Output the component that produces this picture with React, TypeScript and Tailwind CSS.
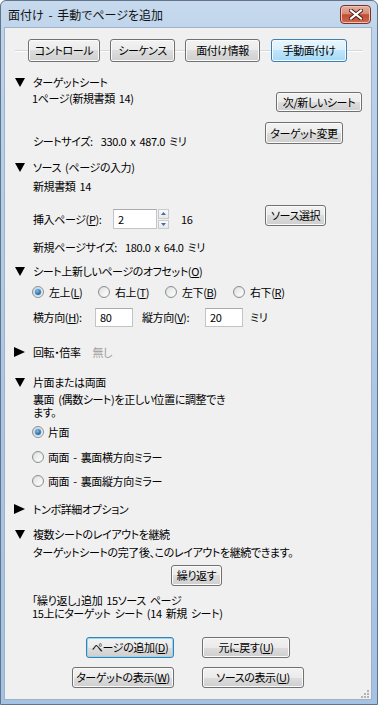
import React from "react";

const btnGray =
  "border-[#707070] bg-[linear-gradient(#f2f2f2,#ebebeb_50%,#dddddd_50%,#cfcfcf)] shadow-[inset_0_0_0_1px_#fbfbfb]";
const btnBlue =
  "border-[#3c7fb1] bg-[linear-gradient(#eaf6fd,#d9f0fc_50%,#bee6fd_50%,#a7d9f5)] shadow-[inset_0_0_0_1px_#f4fbff]";
const btnFocus =
  "border-[#3c7fb1] bg-[linear-gradient(#f2f2f2,#ebebeb_50%,#dddddd_50%,#cfcfcf)] shadow-[inset_0_0_0_1px_#8fd9f6]";

function Btn({
  children,
  className = "",
  kind = "gray",
}: {
  children: React.ReactNode;
  className?: string;
  kind?: "gray" | "blue" | "focus";
}) {
  const look = kind === "blue" ? btnBlue : kind === "focus" ? btnFocus : btnGray;
  return (
    <div
      className={`shrink-0 flex items-center justify-center rounded-[3px] border whitespace-nowrap leading-none ${look} ${className}`}
    >
      {children}
    </div>
  );
}

function Tri({ open }: { open: boolean }) {
  return open ? (
    <svg width="10" height="9" viewBox="0 0 10 9" className="shrink-0">
      <path d="M0 0H10L5 9Z" fill="#000" />
    </svg>
  ) : (
    <svg width="11" height="10" viewBox="0 0 11 10" className="shrink-0 -ml-[1px]">
      <path d="M0 0L11 5L0 10Z" fill="#000" />
    </svg>
  );
}

function Header({ open, children }: { open: boolean; children: React.ReactNode }) {
  return (
    <div className="h-[14px] flex items-center pl-[10px] whitespace-nowrap leading-none">
      <Tri open={open} />
      <span className="ml-[8px]">{children}</span>
    </div>
  );
}

function Radio({ checked = false }: { checked?: boolean }) {
  return (
    <span className="w-[12px] h-[12px] rounded-full border border-[#8c8f92] bg-[linear-gradient(135deg,#d6d8da,#f8f8f8)] flex items-center justify-center shrink-0">
      {checked ? (
        <span className="w-[8px] h-[8px] rounded-full border border-[#b8d8ef] bg-[radial-gradient(circle_at_40%_35%,#7fc0ee,#1d5f99_70%)]" />
      ) : (
        <span className="w-[8px] h-[8px] rounded-full bg-[linear-gradient(135deg,#e2e3e4,#fdfdfd)]" />
      )}
    </span>
  );
}

function Box({ value, className = "" }: { value: string; className?: string }) {
  return (
    <div
      className={`shrink-0 bg-white border border-[#c2c4c8] border-t-[#a9abb0] flex items-center pl-[4px] leading-none ${className}`}
    >
      {value}
    </div>
  );
}

function Spin() {
  return (
    <div className="w-[11px] h-[20px] flex flex-col gap-[1px] shrink-0">
      <div className="flex-1 border border-[#c8cacd] bg-[linear-gradient(#fafafa,#e6e8ea)] flex items-center justify-center">
        <svg width="5" height="3" viewBox="0 0 5 3">
          <path d="M0 3L2.5 0L5 3Z" fill="#4a6a9a" />
        </svg>
      </div>
      <div className="flex-1 border border-[#c8cacd] bg-[linear-gradient(#fafafa,#e6e8ea)] flex items-center justify-center">
        <svg width="5" height="3" viewBox="0 0 5 3">
          <path d="M0 0L2.5 3L5 0Z" fill="#4a6a9a" />
        </svg>
      </div>
    </div>
  );
}

function Seg({ w }: { w: string }) {
  return <div className={`h-[2px] border-t border-[#d3d9df] border-b-white border-b ${w}`} />;
}

export default function App() {
  return (
    <div className="w-[378px] h-[705px] flex flex-col relative overflow-hidden rounded-t-[6px] border border-[#61748a] bg-[linear-gradient(#c7daee,#bcd2ea_6%,#aac6e5_60%,#a3c2e4)] pl-[3px] pr-[5px] pb-[4px] text-[11px] tracking-[-0.4px] [word-spacing:2px] text-black font-['Noto_Sans_CJK_JP',sans-serif] [font-feature-settings:'palt']">
      {/* title bar */}
      <div className="h-[26px] flex items-start shrink-0">
        <div className="pl-[4px] pt-[8px] leading-none whitespace-nowrap text-[12px] tracking-normal text-[#111]">
          面付け - 手動でページを追加
        </div>
        <div className="ml-auto mt-[4px] mr-[1px] w-[31px] h-[19px] rounded-[4px] border border-[#7a3226] bg-[linear-gradient(#e6b0a1,#d68a77_45%,#c14c33_52%,#cc6a52)] shadow-[inset_0_0_0_1px_#efc3b5] flex items-center justify-center">
          <svg width="14" height="11" viewBox="0 0 14 11">
            <path d="M2 1.5L12 9.5M12 1.5L2 9.5" stroke="#4a1a12" strokeWidth="4" strokeLinecap="square" />
            <path d="M2 1.5L12 9.5M12 1.5L2 9.5" stroke="#ffffff" strokeWidth="2.2" strokeLinecap="square" />
          </svg>
        </div>
      </div>

      {/* client */}
      <div className="flex-1 bg-[#f0f0f0] border border-[#9fb2c8] flex flex-col">
        {/* tabs */}
        <div className="mt-[11px] h-[23px] flex items-center">
          <div className="w-[10px]" />
          <Seg w="w-[13px]" />
          <Btn className="w-[72px] h-[23px]">コントロール</Btn>
          <Seg w="w-[10px]" />
          <Btn className="w-[65px] h-[23px]">シーケンス</Btn>
          <Seg w="w-[10px]" />
          <Btn className="w-[75px] h-[23px]">面付け情報</Btn>
          <Seg w="w-[11px]" />
          <Btn kind="blue" className="w-[76px] h-[23px]">手動面付け</Btn>
          <Seg w="w-[16px]" />
        </div>

        {/* target sheet */}
        <div className="mt-[13px]">
          <Header open>ターゲットシート</Header>
        </div>
        <div className="mt-[2px] h-[57px] flex">
          <div className="flex-1 pl-[27px] flex flex-col">
            <div className="h-[14px] flex items-center leading-none whitespace-nowrap">1ページ(新規書類 14)</div>
            <div className="mt-[29px] h-[14px] flex items-center leading-none whitespace-nowrap pl-[1px]">
              シートサイズ:&nbsp;&nbsp;330.0 x 487.0 ミリ
            </div>
          </div>
          <div className="flex flex-col items-end pr-[9px]">
            <Btn className="mt-[1px] w-[86px] h-[20px]">次/新しいシート</Btn>
            <Btn className="mt-[10px] mr-[19px] w-[78px] h-[22px]">ターゲット変更</Btn>
          </div>
        </div>

        {/* source */}
        <div className="mt-[12px]">
          <Header open>ソース (ページの入力)</Header>
        </div>
        <div className="mt-[5px] h-[14px] pl-[28px] flex items-center leading-none whitespace-nowrap">新規書類 14</div>
        <div className="mt-[12px] h-[24px] flex">
          <div className="w-[260px] pl-[28px] flex items-end">
            <div className="w-[80px] h-[20px] flex items-center leading-none whitespace-nowrap">
              挿入ページ(<u>P</u>):
            </div>
            <Box value="2" className="w-[44px] h-[20px]" />
            <div className="ml-[1px]">
              <Spin />
            </div>
            <div className="ml-[12px] h-[20px] flex items-center leading-none">16</div>
          </div>
          <Btn className="w-[61px] h-[21px]">ソース選択</Btn>
        </div>
        <div className="mt-[11px] h-[14px] pl-[28px] flex items-center leading-none whitespace-nowrap">
          新規ページサイズ:&nbsp;&nbsp;180.0 x 64.0 ミリ
        </div>

        {/* offset */}
        <div className="mt-[10px]">
          <Header open>
            シート上新しいページのオフセット(<u>O</u>)
          </Header>
        </div>
        <div className="mt-[7px] h-[14px] pl-[27px] flex items-center leading-none whitespace-nowrap">
          <div className="w-[66px] flex items-center gap-[5px]">
            <Radio checked />
            <span>
              左上(<u>L</u>)
            </span>
          </div>
          <div className="w-[67px] flex items-center gap-[5px]">
            <Radio />
            <span>
              右上(<u>T</u>)
            </span>
          </div>
          <div className="w-[68px] flex items-center gap-[5px]">
            <Radio />
            <span>
              左下(<u>B</u>)
            </span>
          </div>
          <div className="flex items-center gap-[5px]">
            <Radio />
            <span>
              右下(<u>R</u>)
            </span>
          </div>
        </div>
        <div className="mt-[9px] h-[19px] pl-[28px] flex items-center leading-none whitespace-nowrap">
          <div className="w-[62px]">
            横方向(<u>H</u>):
          </div>
          <Box value="80" className="w-[38px] h-[19px]" />
          <div className="ml-[9px] w-[63px]">
            縦方向(<u>V</u>):
          </div>
          <Box value="20" className="w-[38px] h-[19px]" />
          <div className="ml-[7px]">ミリ</div>
        </div>

        {/* rotate */}
        <div className="mt-[18px] h-[14px] flex items-center">
          <Header open={false}>回転・倍率</Header>
          <span className="ml-[12px] text-[#a0a0a0] leading-none">無し</span>
        </div>

        {/* sides */}
        <div className="mt-[16px]">
          <Header open>片面または両面</Header>
        </div>
        <div className="mt-[4px] h-[26px] pl-[28px] leading-[13px]">
          裏面 (偶数シート)を正しい位置に調整でき
          <br />
          ます。
        </div>
        <div className="mt-[6px] h-[14px] pl-[27px] flex items-center gap-[4px] leading-none whitespace-nowrap">
          <Radio checked />
          <span>片面</span>
        </div>
        <div className="mt-[11px] h-[14px] pl-[27px] flex items-center gap-[4px] leading-none whitespace-nowrap">
          <Radio />
          <span>両面 - 裏面横方向ミラー</span>
        </div>
        <div className="mt-[10px] h-[14px] pl-[27px] flex items-center gap-[4px] leading-none whitespace-nowrap">
          <Radio />
          <span>両面 - 裏面縦方向ミラー</span>
        </div>

        {/* marks */}
        <div className="mt-[14px]">
          <Header open={false}>トンボ詳細オプション</Header>
        </div>

        {/* continue */}
        <div className="mt-[11px]">
          <Header open>複数シートのレイアウトを継続</Header>
        </div>
        <div className="mt-[4px] h-[14px] pl-[28px] flex items-center leading-none whitespace-nowrap">
          ターゲットシートの完了後、このレイアウトを継続できます。
        </div>
        <div className="mt-[6px] flex pl-[166px]">
          <Btn className="w-[51px] h-[21px]">繰り返す</Btn>
        </div>
        <div className="mt-[8px] h-[26px] pl-[27px] leading-[13px] whitespace-nowrap">
          「繰り返し」追加 15ソース ページ
          <br />
          15上にターゲット シート (14 新規 シート)
        </div>

        {/* bottom buttons */}
        <div className="mt-[17px] flex">
          <div className="w-[169px] flex justify-end">
            <Btn kind="focus" className="w-[88px] h-[21px]">
              ページの追加(<u>D</u>)
            </Btn>
          </div>
          <div className="ml-[28px]">
            <Btn className="w-[88px] h-[21px]">
              元に戻す(<u>U</u>)
            </Btn>
          </div>
        </div>
        <div className="mt-[9px] flex">
          <div className="w-[169px] flex justify-end">
            <Btn className="w-[102px] h-[21px]">
              ターゲットの表示(<u>W</u>)
            </Btn>
          </div>
          <div className="ml-[28px]">
            <Btn className="w-[102px] h-[21px]">
              ソースの表示(<u>U</u>)
            </Btn>
          </div>
        </div>
      </div>

      {/* resize grip */}
      <svg width="8" height="8" viewBox="0 0 8 8" className="absolute right-[8px] bottom-[6px]">
        {[
          [6, 0],
          [3, 3],
          [6, 3],
          [0, 6],
          [3, 6],
          [6, 6],
        ].map(([x, y], i) => (
          <rect key={i} x={x} y={y} width="2" height="2" fill="#b4b4b4" />
        ))}
      </svg>
    </div>
  );
}
